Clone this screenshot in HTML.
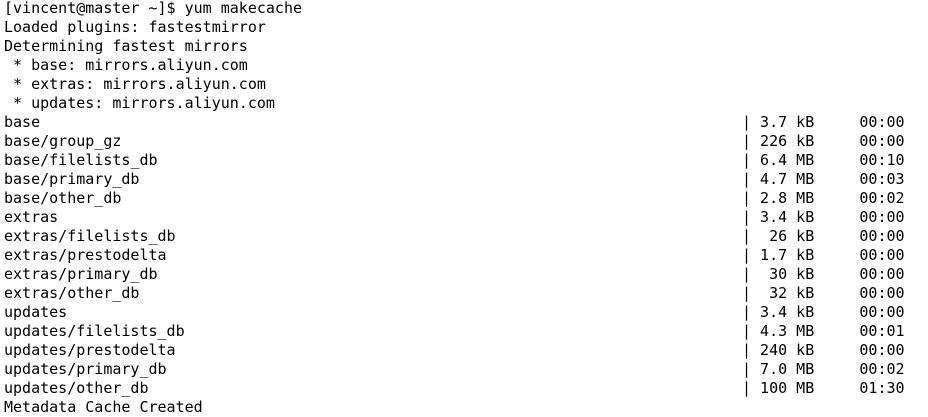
<!DOCTYPE html>
<html><head><style>
body{margin:0;background:#fff;width:928px;height:417px;overflow:hidden}
pre{margin:0;position:absolute;font-family:"DejaVu Sans Mono","Liberation Mono",monospace;font-size:15px;line-height:19px;color:#000}
#a{left:4px;top:-1px}
#b{left:742px;top:113px}
</style></head><body>
<pre id="a">[vincent@master ~]$ yum makecache
Loaded plugins: fastestmirror
Determining fastest mirrors
 * base: mirrors.aliyun.com
 * extras: mirrors.aliyun.com
 * updates: mirrors.aliyun.com
base
base/group_gz
base/filelists_db
base/primary_db
base/other_db
extras
extras/filelists_db
extras/prestodelta
extras/primary_db
extras/other_db
updates
updates/filelists_db
updates/prestodelta
updates/primary_db
updates/other_db
Metadata Cache Created</pre>
<pre id="b">| 3.7 kB     00:00
| 226 kB     00:00
| 6.4 MB     00:10
| 4.7 MB     00:03
| 2.8 MB     00:02
| 3.4 kB     00:00
|  26 kB     00:00
| 1.7 kB     00:00
|  30 kB     00:00
|  32 kB     00:00
| 3.4 kB     00:00
| 4.3 MB     00:01
| 240 kB     00:00
| 7.0 MB     00:02
| 100 MB     01:30</pre>
</body></html>
